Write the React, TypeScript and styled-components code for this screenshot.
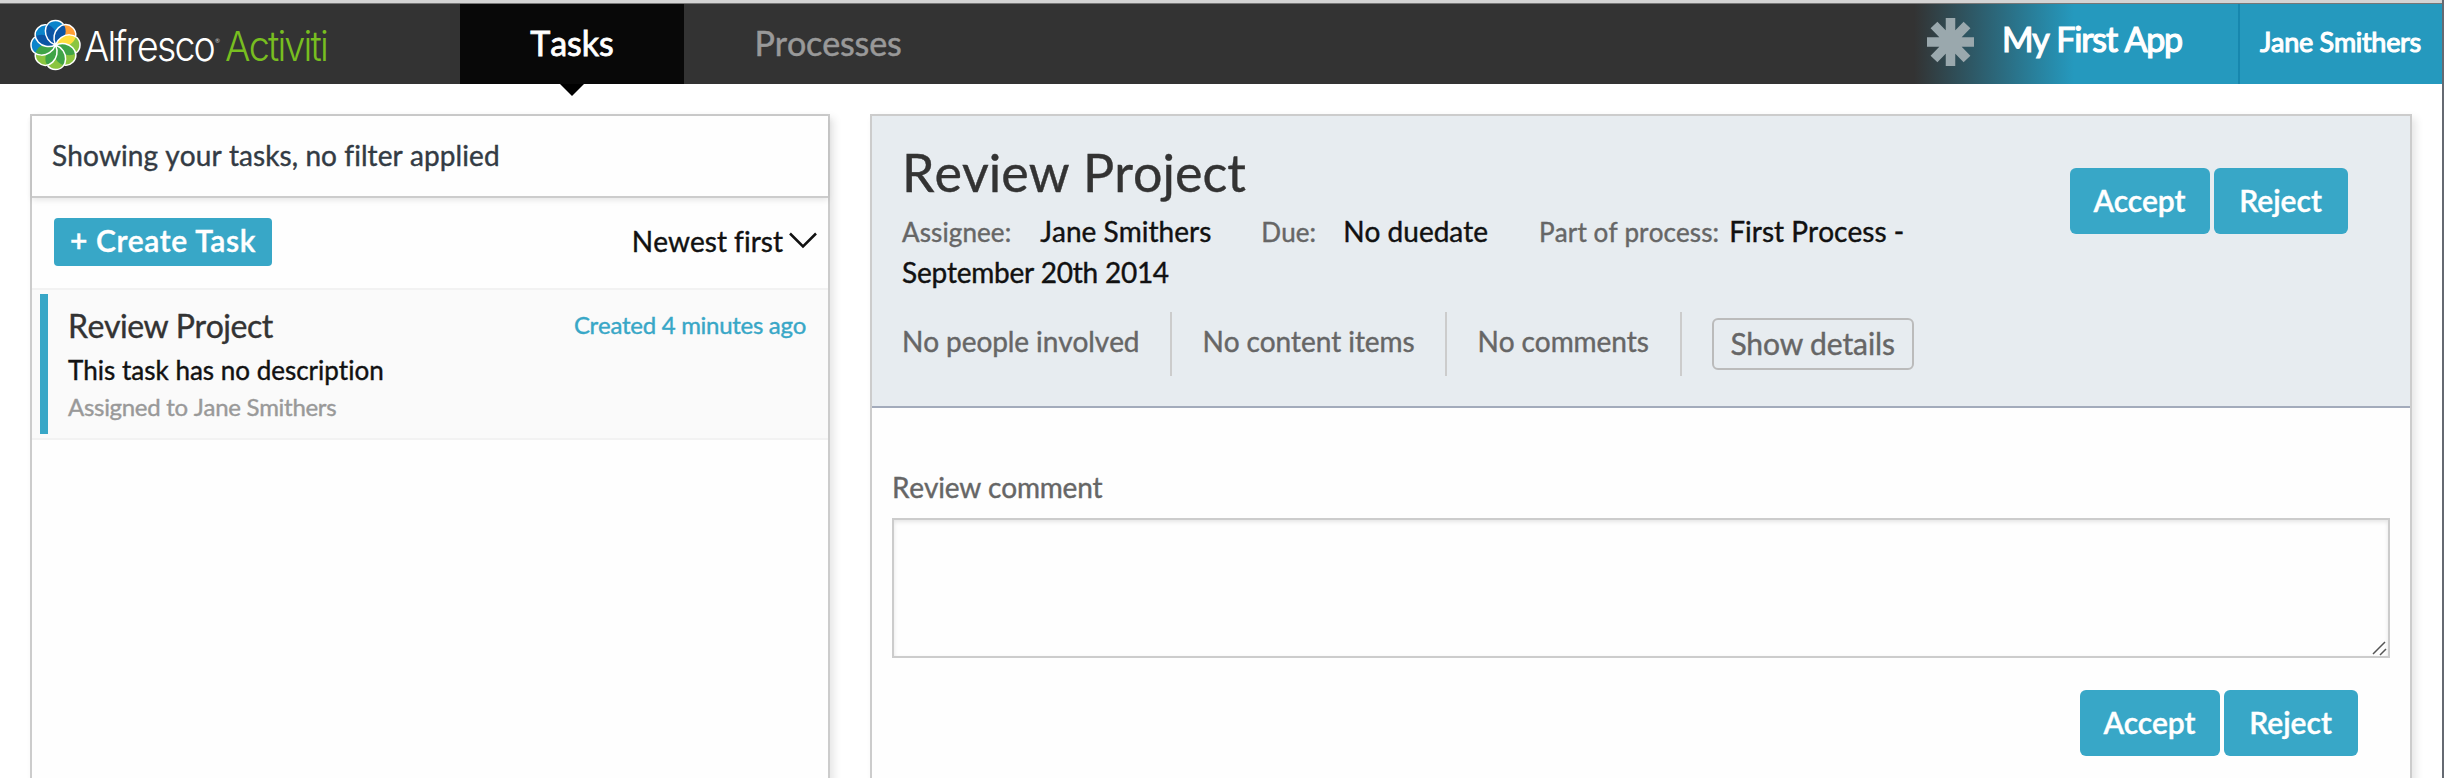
import React from "react";
import styled, { createGlobalStyle } from "styled-components";

const GlobalStyle = createGlobalStyle`
  * { box-sizing: border-box; }
  html, body { margin: 0; padding: 0; }
  body {
    background: #fff;
    font-family: Lato, "Open Sans", sans-serif;
    font-kerning: none;
    font-variant-ligatures: none;
    -webkit-text-stroke: 0.4px currentColor;
    color: #111;
    overflow: hidden;
  }
  button, textarea { font-family: inherit; }
`;

const Window = styled.div`
  width: 2444px;
  height: 778px;
  display: flex;
  flex-direction: column;
  overflow: hidden;
  border-right: 2px solid #656a72;
`;

const WindowEdge = styled.div`
  flex: none;
  height: 4px;
  background: #d4d4d4;
  border-bottom: 1px solid #777;
`;

const Header = styled.header`
  flex: none;
  display: flex;
  height: 80px;
  background: #333;
`;

const Brand = styled.div`
  display: flex;
  width: 460px;
  padding: 16px 0 0 30px;
`;

const NavTab = styled.a<{ $active?: boolean }>`
  position: relative;
  width: ${(p) => (p.$active ? 224 : 288)}px;
  text-align: center;
  font-size: 34px;
  line-height: 78px;
  letter-spacing: ${(p) => (p.$active ? 0 : -0.15)}px;
  -webkit-text-stroke-width: ${(p) => (p.$active ? 0.8 : 0.5)}px;
  color: ${(p) => (p.$active ? "#fff" : "#999")};
  background: ${(p) => (p.$active ? "#080808" : "transparent")};
`;

const TabArrow = styled.span`
  position: absolute;
  left: 100px;
  top: 80px;
  border: 12px solid transparent;
  border-top-color: #000;
  border-bottom: 0;
`;

const AppName = styled.div`
  display: flex;
  margin-left: auto;
  width: 324px;
  padding: 14px 0 0 13px;
  background: linear-gradient(to right, #333 0, #2599be 160px);
`;

const AppTitle = styled.span`
  margin-left: 28px;
  font-size: 34px;
  line-height: 42px;
  letter-spacing: -1.2px;
  -webkit-text-stroke-width: 1.2px;
  color: #fff;
`;

const User = styled.div`
  width: 204px;
  padding-left: 20px;
  border-left: 2px solid #1787ae;
  background: #2599be;
  color: #fff;
  font-size: 27px;
  line-height: 75px;
  letter-spacing: -0.3px;
  -webkit-text-stroke-width: 1.1px;
  white-space: nowrap;
`;

const Main = styled.main`
  flex: 1;
  display: flex;
  align-items: flex-start;
  gap: 40px;
  padding: 30px 30px 0;
`;

const Panel = styled.section<{ $width: number }>`
  width: ${(p) => p.$width}px;
  height: 720px;
  border: 2px solid #ccc;
  background: #fefefe;
  box-shadow: 4px 4px 8px rgba(0, 0, 0, 0.1);
`;

const FilterBar = styled.div`
  height: 82px;
  padding-left: 20px;
  border-bottom: 2px solid #ccc;
  box-shadow: 0 2px 6px rgba(0, 0, 0, 0.1);
  font-size: 28px;
  line-height: 78px;
  letter-spacing: 0.07px;
  color: #333b44;
`;

const ListActions = styled.div`
  display: flex;
  justify-content: space-between;
  height: 90px;
  padding: 20px 11px 0 22px;
`;

const CreateButton = styled.button`
  width: 218px;
  height: 48px;
  padding: 0 0 4px;
  border: 0;
  border-radius: 4px;
  background: #38a7c7;
  color: #fff;
  font-size: 30px;
  font-weight: 600;
  line-height: 44px;
  letter-spacing: 0.65px;
`;

const Sort = styled.div`
  display: flex;
  gap: 6px;
  font-size: 28px;
  line-height: 46px;
`;

const Task = styled.article`
  display: flex;
  height: 152px;
  padding: 4px 22px 4px 8px;
  border-top: 2px solid #f2f2f2;
  border-bottom: 2px solid #f2f2f2;
  background: #fafafa;
`;

const TaskMarker = styled.span`
  width: 8px;
  height: 140px;
  margin-right: 20px;
  background: #38a7c7;
`;

const TaskBody = styled.div`
  flex: 1;
`;

const TaskHead = styled.div`
  display: flex;
  justify-content: space-between;
  height: 56px;
`;

const TaskName = styled.span`
  font-size: 32px;
  line-height: 64px;
  letter-spacing: -0.5px;
  color: #333;
`;

const TaskTime = styled.span`
  font-size: 24px;
  line-height: 62px;
  letter-spacing: -0.3px;
  color: #38a7c7;
`;

const TaskDescription = styled.div`
  font-size: 26px;
  line-height: 40px;
`;

const TaskOwner = styled.div`
  font-size: 24px;
  line-height: 34px;
  letter-spacing: -0.3px;
  color: #999;
`;

const DetailHead = styled.div`
  display: flex;
  justify-content: space-between;
  height: 292px;
  padding: 24px 62px 0 30px;
  border-bottom: 2px solid #a3abbb;
  background: #e7ecf0;
`;

const DetailInfo = styled.div`
  width: 1030px;
`;

const Title = styled.h1`
  height: 71px;
  margin: 0;
  font-size: 52px;
  font-weight: 400;
  line-height: 64px;
  color: #333;
`;

const Meta = styled.div`
  height: 84px;
  font-size: 28px;
  line-height: 40px;
`;

const MetaLabel = styled.span<{ $gap: number }>`
  margin-right: ${(p) => p.$gap}px;
  font-size: 26px;
  letter-spacing: 0.1px;
  color: #666;
`;

const MetaValue = styled.span<{ $gap?: number }>`
  margin-right: ${(p) => p.$gap ?? 0}px;
`;

const StartDate = styled.span`
  letter-spacing: -0.25px;
`;

const Stats = styled.div`
  display: flex;
  margin-top: 17px;
`;

const Stat = styled.span`
  height: 64px;
  margin-right: 30px;
  padding-right: 31px;
  border-right: 2px solid #ccc;
  font-size: 28px;
  line-height: 58px;
  letter-spacing: -0.1px;
  color: #666;
`;

const DetailsButton = styled.button`
  width: 202px;
  height: 52px;
  margin-top: 6px;
  padding: 0 0 3px;
  border: 2px solid #bbb;
  border-radius: 6px;
  background: transparent;
  color: #666;
  font-size: 30px;
  line-height: 44px;
  letter-spacing: -0.1px;
`;

const Outcomes = styled.div<{ $top: number; $right?: number }>`
  display: flex;
  justify-content: flex-end;
  gap: 4px;
  padding: ${(p) => p.$top}px ${(p) => p.$right ?? 0}px 0 0;
`;

const OutcomeButton = styled.button<{ $width: number }>`
  width: ${(p) => p.$width}px;
  height: 66px;
  padding: 0 1px 2px 0;
  border: 0;
  border-radius: 6px;
  background: #38a7c7;
  color: #fff;
  font-size: 30px;
  font-weight: 600;
  line-height: 62px;
`;

const Form = styled.form`
  padding: 58px 20px 0;
`;

const FieldLabel = styled.label`
  display: block;
  height: 52px;
  font-size: 28px;
  line-height: 42px;
  letter-spacing: -0.2px;
  color: #666;
`;

const FieldWrap = styled.div`
  position: relative;
  height: 140px;
`;

const CommentField = styled.textarea`
  display: block;
  width: 1498px;
  height: 140px;
  resize: none;
  border: 2px solid #ccc;
  background: #fefefe;
  box-shadow: inset 0 2px 4px rgba(0, 0, 0, 0.1);
`;

const Grip = styled.svg`
  position: absolute;
  right: 2px;
  bottom: 2px;
`;

const LogoMark = styled.svg`
  overflow: visible;
`;

const Wordmark = styled.g`
  font-family: Inter, sans-serif;
  font-size: 41px;
  font-weight: 300;
  letter-spacing: -2px;
  -webkit-text-stroke-width: 0;
`;

const PETAL = "M0 0C-14-5-13-24.5 0-24.5S14-5 0 0Z";
const PETAL_EDGE = "M0 0C-14-5-13-24.5 0-24.5C3.5-24.5 6.2-23 8-20.5";
const BLUE = { fill: "#0a84cb", shade: "#0b55a5" };
const GREEN = { fill: "#8bc53f", shade: "#3fa447" };
const ORANGE = { fill: "#ff9e35", shade: "#ffdf3f" };
const PETALS = [
  { angle: 0, ...BLUE },
  { angle: 45, ...ORANGE },
  { angle: 90, ...GREEN },
  { angle: 135, ...GREEN },
  { angle: 180, ...GREEN },
  { angle: 225, ...GREEN },
  { angle: 270, ...BLUE },
  { angle: 315, ...BLUE },
];

function Logo() {
  return (
    <LogoMark width="310" height="60" viewBox="0 0 310 60">
      <clipPath id="nextPetal">
        <path d={PETAL} transform="rotate(45)" />
      </clipPath>
      <g transform="translate(25.5 25)">
        {PETALS.map((p) => (
          <path key={p.angle} d={PETAL} transform={`rotate(${p.angle})`} fill={p.fill} />
        ))}
        {PETALS.map((p) => (
          <g key={p.angle} transform={`rotate(${p.angle})`}>
            <path d={PETAL} fill={p.shade} clipPath="url(#nextPetal)" />
          </g>
        ))}
        {PETALS.map((p) => (
          <path key={p.angle} d={PETAL_EDGE} transform={`rotate(${p.angle})`} fill="none" stroke="#fff" strokeWidth="1.5" />
        ))}
        <circle r="2" fill="#fff" />
      </g>
      <Wordmark>
        <text x="54" y="41" fill="#fff" textLength="130" lengthAdjust="spacingAndGlyphs">Alfresco</text>
        <text x="195" y="41" fill="#78be20" textLength="102" lengthAdjust="spacingAndGlyphs">Activiti</text>
      </Wordmark>
      <text x="185" y="23" fill="#ccc" fontSize="6">®</text>
    </LogoMark>
  );
}

function AppIcon() {
  return (
    <svg width="47" height="48" viewBox="-23.5 -24 47 48" stroke="#9aa8ad" strokeWidth="9.5">
      <path d="M0-24V24M-23.5 0H23.5M-16.5-17L16.5 17M16.5-17L-16.5 17" />
    </svg>
  );
}

export default function App() {
  return (
    <Window>
      <GlobalStyle />
      <WindowEdge />
      <Header>
        <Brand><Logo /></Brand>
        <NavTab $active>Tasks<TabArrow /></NavTab>
        <NavTab>Processes</NavTab>
        <AppName><AppIcon /><AppTitle>My First App</AppTitle></AppName>
        <User>Jane Smithers</User>
      </Header>
      <Main>
        <Panel $width={800}>
          <FilterBar>Showing your tasks, no filter applied</FilterBar>
          <ListActions>
            <CreateButton>+ Create Task</CreateButton>
            <Sort>
              Newest first
              <svg width="28" height="48" viewBox="0 0 28 48" fill="none" stroke="#111" strokeWidth="2.5">
                <path d="M1 15.5L14 28.5L27 15.5" />
              </svg>
            </Sort>
          </ListActions>
          <Task>
            <TaskMarker />
            <TaskBody>
              <TaskHead>
                <TaskName>Review Project</TaskName>
                <TaskTime>Created 4 minutes ago</TaskTime>
              </TaskHead>
              <TaskDescription>This task has no description</TaskDescription>
              <TaskOwner>Assigned to Jane Smithers</TaskOwner>
            </TaskBody>
          </Task>
        </Panel>
        <Panel $width={1542}>
          <DetailHead>
            <DetailInfo>
              <Title>Review Project</Title>
              <Meta>
                <MetaLabel $gap={29}>Assignee:</MetaLabel><MetaValue $gap={50}>Jane Smithers</MetaValue>
                <MetaLabel $gap={27}>Due:</MetaLabel><MetaValue $gap={51}>No duedate</MetaValue>
                <MetaLabel $gap={10}>Part of process:</MetaLabel>
                <MetaValue>First Process - </MetaValue><StartDate>September 20th 2014</StartDate>
              </Meta>
              <Stats>
                <Stat>No people involved</Stat>
                <Stat>No content items</Stat>
                <Stat>No comments</Stat>
                <DetailsButton>Show details</DetailsButton>
              </Stats>
            </DetailInfo>
            <Outcomes $top={28}>
              <OutcomeButton $width={140}>Accept</OutcomeButton>
              <OutcomeButton $width={134}>Reject</OutcomeButton>
            </Outcomes>
          </DetailHead>
          <Form>
            <FieldLabel>Review comment</FieldLabel>
            <FieldWrap>
              <CommentField />
              <Grip width="16" height="16" viewBox="0 0 16 16" stroke="#555" strokeWidth="1.5">
                <path d="M1 14L13 2M8 15L14 9" />
              </Grip>
            </FieldWrap>
            <Outcomes $top={32} $right={32}>
              <OutcomeButton type="button" $width={140}>Accept</OutcomeButton>
              <OutcomeButton type="button" $width={134}>Reject</OutcomeButton>
            </Outcomes>
          </Form>
        </Panel>
      </Main>
    </Window>
  );
}
